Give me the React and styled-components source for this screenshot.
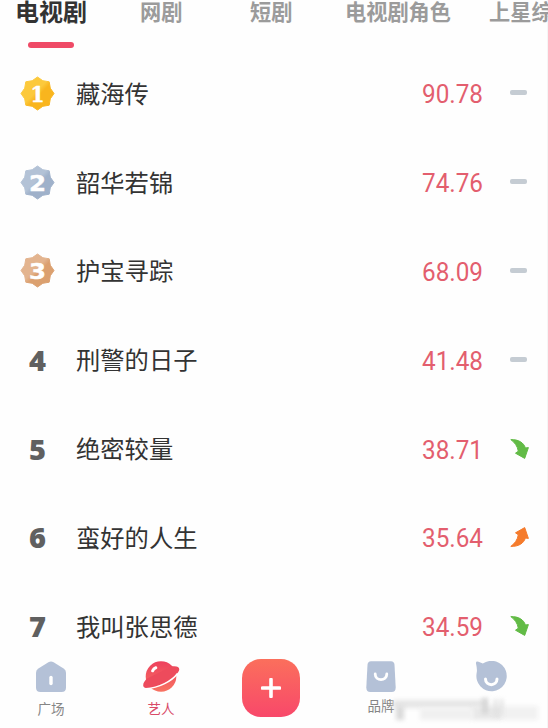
import React from "react";
import styled, { createGlobalStyle, css } from "styled-components";

const GlobalStyle = createGlobalStyle`
  * {
    box-sizing: border-box;
  }
  body {
    margin: 0;
    background: #fefefe;
    overflow: hidden;
    font-family: "Noto Sans CJK SC", sans-serif;
  }
`;

const Page = styled.div`
  display: flex;
  flex-direction: column;
  width: 548px;
  height: 728px;
  overflow: hidden;
  box-shadow: inset -1px 0 #f5f5f5;
`;

const TabBar = styled.nav`
  display: flex;
  flex: none;
  height: 49px;
  padding-left: 15px;
`;

const Tab = styled.div`
  display: flex;
  flex-direction: column;
  flex: none;
  width: ${(props) => props.$width}px;
  font-size: ${(props) => (props.$active ? 24 : 21.2)}px;
  font-weight: 700;
  line-height: 22px;
  color: ${(props) => (props.$active ? "#333" : "#9b9b9b")};
  white-space: nowrap;
`;

const TabLine = styled.div`
  width: 46px;
  height: 6px;
  margin: 20px 0 0 13px;
  border-radius: 3px;
  background: #ef4a66;
`;

const List = styled.main`
  flex: none;
  height: 605px;
`;

const Row = styled.div`
  display: grid;
  grid-template-columns: 76px 1fr 94px 58px;
  align-items: center;
  height: 88.8px;
`;

const Rank = styled.div`
  display: flex;
  justify-content: center;
  width: 75px;
  font-family: "Open Sans", sans-serif;
  font-size: 29px;
  font-weight: 800;
  line-height: 32px;
  color: #606060;
`;

const Title = styled.div`
  margin-top: -1px;
  font-size: 24.3px;
  line-height: 36px;
  color: #333;
  white-space: nowrap;
`;

const Score = styled.svg`
  display: block;
  width: 64px;
  height: 30px;
  margin-left: 26px;
  overflow: visible;
  font-family: Roboto, sans-serif;
  font-size: 25.5px;
  fill: #e35e6e;
`;

const Trend = styled.div`
  display: flex;
  padding-left: 20px;
`;

const Dash = styled.div`
  width: 17px;
  height: 5px;
  margin: -1px 0 0;
  border-radius: 2px;
  background: #c5ccd3;
`;

const Footer = styled.footer`
  position: relative;
  display: flex;
  flex: none;
  height: 74px;
`;

const NavItem = styled.div`
  display: flex;
  flex-direction: column;
  align-items: center;
  width: ${(props) => props.$width}px;
  padding-top: 7px;
  font-size: 13.5px;
  line-height: 18px;
  color: ${(props) => (props.$active ? "#d94b68" : "#858585")};

  span {
    margin-top: ${(props) => props.$gap ?? 2}px;
  }
`;

const AddButton = styled.div`
  display: flex;
  align-items: center;
  justify-content: center;
  width: 58px;
  height: 58px;
  margin-top: -2px;
  border-radius: 19px;
  background: linear-gradient(#fb6f5c, #f8486a);
`;

const smear = css`
  position: absolute;
  filter: blur(2px);
`;

const Smudge = styled.div`
  ${smear}
  left: ${(props) => props.$x}px;
  top: ${(props) => props.$y}px;
  width: ${(props) => props.$w}px;
  height: ${(props) => props.$h}px;
  background: ${(props) => props.$color};
`;

const tabs = [
  { label: "电视剧", width: 125, active: true },
  { label: "网剧", width: 110 },
  { label: "短剧", width: 95 },
  { label: "电视剧角色", width: 144 },
  { label: "上星综艺", width: 100 },
];

const rows = [
  { rank: 1, title: "藏海传", score: "90.78", trend: "same" },
  { rank: 2, title: "韶华若锦", score: "74.76", trend: "same" },
  { rank: 3, title: "护宝寻踪", score: "68.09", trend: "same" },
  { rank: 4, title: "刑警的日子", score: "41.48", trend: "same" },
  { rank: 5, title: "绝密较量", score: "38.71", trend: "down" },
  { rank: 6, title: "蛮好的人生", score: "35.64", trend: "up" },
  { rank: 7, title: "我叫张思德", score: "34.59", trend: "down" },
];

const smudges = [
  { x: 393, y: 46, w: 92, h: 8, color: "#e6e6e6" },
  { x: 396, y: 52, w: 8, h: 14, color: "#dadada" },
  { x: 420, y: 54, w: 52, h: 12, color: "#f0f0f0" },
  { x: 472, y: 52, w: 30, h: 14, color: "#e9e9e9" },
  { x: 502, y: 52, w: 36, h: 14, color: "#f1f1f1" },
  { x: 482, y: 44, w: 6, h: 16, color: "#d5d5d5" },
  { x: 494, y: 45, w: 3, h: 18, color: "#dedede" },
  { x: 500, y: 45, w: 3, h: 18, color: "#dedede" },
];

const medals = {
  1: { from: "#fcc93c", to: "#f9b51e" },
  2: { from: "#b3c2d6", to: "#9fb1ca" },
  3: { from: "#e3b48f", to: "#dba06f" },
};

function Medal({ rank }) {
  const { from, to } = medals[rank];
  return (
    <svg width="35" height="35" viewBox="0 0 35 35">
      <defs>
        <linearGradient id={`medal${rank}`} x1="0" y1="0" x2="1" y2="1">
          <stop offset="0.45" stopColor={from} />
          <stop offset="0.55" stopColor={to} />
        </linearGradient>
      </defs>
      <path
        d="M17.5 1 22.8 4.7 29.2 5.8 30.3 12.2 34 17.5 30.3 22.8 29.2 29.2 22.8 30.3 17.5 34 12.2 30.3 5.8 29.2 4.7 22.8 1 17.5 4.7 12.2 5.8 5.8 12.2 4.7Z"
        fill={`url(#medal${rank})`}
        stroke={`url(#medal${rank})`}
        strokeLinejoin="round"
      />
      <text
        x="17.5"
        y="25.5"
        textAnchor="middle"
        textLength={rank === 1 ? 14 : 17}
        lengthAdjust="spacingAndGlyphs"
        fontFamily={rank === 1 ? "DejaVu Serif" : "DejaVu Sans"}
        fontSize="22"
        fontWeight="700"
        fill="#fff"
        stroke="#fff"
        strokeWidth="0.5"
      >
        {rank}
      </text>
    </svg>
  );
}

function Arrow({ up }) {
  const color = up ? "#f57b2c" : "#62bb46";
  return (
    <svg width="20" height="22" viewBox="0 0 20 22">
      <g transform={up ? "matrix(1 0 0 -1 0 22)" : undefined}>
        <path
          d="M.8 1.6C8.5 1.4 13.6 4.5 15.4 10L18.4 9.6 14.7 20.4 5.5 15.2 8.3 13.2C7.6 8.2 4.6 4.3.8 1.6Z"
          fill={color}
          stroke={color}
          strokeWidth="1"
          strokeLinejoin="round"
        />
      </g>
    </svg>
  );
}

function HomeIcon() {
  return (
    <svg width="32" height="36" viewBox="0 0 32 36">
      <path
        d="M13.4 1.2Q16 -.4 18.6 1.2L29 7.8Q31 9.3 31 12V26.5Q31 31 26.5 31H5.5Q1 31 1 26.5V12Q1 9.3 3 7.8Z"
        fill="#b4c1d7"
      />
      <path d="M16 16.5V22.5" stroke="#fff" strokeWidth="3.4" strokeLinecap="round" />
    </svg>
  );
}

function PlanetIcon() {
  return (
    <svg width="38" height="36" viewBox="0 0 38 36">
      <defs>
        <linearGradient id="planet" x1="0" y1="0" x2="0" y2="1">
          <stop offset="0" stopColor="#ed405d" />
          <stop offset="1" stopColor="#f87362" />
        </linearGradient>
      </defs>
      <circle cx="19" cy="15.5" r="15.3" fill="url(#planet)" />
      <path
        d="M30 5.3C36.5 4.5 38.8 7 36.3 11 33 16.5 24 22 15 25 7.5 27.7 1.5 28 1.2 24.5 1 22 3 19.5 5 17.5Z"
        fill="#ed4b5c"
      />
      <path d="M4 27.7C17 27 30 20 35.5 12.5" fill="none" stroke="#fff" strokeWidth="1.5" />
      <path d="M10.6 9.8Q11.6 7.4 13.8 6.7" fill="none" stroke="#fff" strokeWidth="3" strokeLinecap="round" />
    </svg>
  );
}

function BagIcon() {
  return (
    <svg width="32" height="36" viewBox="0 0 32 36">
      <path
        d="M6 .3H26Q29.2 .3 29.5 3.8L30.7 26.5Q30.7 31 26.7 31H5.3Q1.3 31 1.3 26.5L2.5 3.8Q2.8 .3 6 .3Z"
        fill="#b4c1d7"
      />
      <path d="M10.2 13C10.2 20.5 21.8 20.5 21.8 13" fill="none" stroke="#fff" strokeWidth="2.8" strokeLinecap="round" />
    </svg>
  );
}

function FaceIcon() {
  return (
    <svg width="34" height="36" viewBox="0 0 34 36">
      <path
        d="M2 2.4Q1.7 -.2 4.5 .8L8.8 2.6A15.2 15.2 0 1 1 2.6 12.3Q3.5 9 2 2.4Z"
        fill="#b4c1d7"
      />
      <path d="M11.5 18C11.5 25.5 23 25.5 23 18" fill="none" stroke="#fff" strokeWidth="3" strokeLinecap="round" />
    </svg>
  );
}

function RankRow({ row }) {
  return (
    <Row>
      <Rank>{row.rank <= 3 ? <Medal rank={row.rank} /> : row.rank}</Rank>
      <Title>{row.title}</Title>
      <Score>
        <text x="0" y="24.5" textLength="61" lengthAdjust="spacingAndGlyphs">
          {row.score}
        </text>
      </Score>
      <Trend>{row.trend === "same" ? <Dash /> : <Arrow up={row.trend === "up"} />}</Trend>
    </Row>
  );
}

function App() {
  return (
    <>
      <GlobalStyle />
      <Page>
        <TabBar>
          {tabs.map((tab) => (
            <Tab key={tab.label} $width={tab.width} $active={tab.active}>
              {tab.label}
              {tab.active && <TabLine />}
            </Tab>
          ))}
        </TabBar>
        <List>
          {rows.map((row) => (
            <RankRow key={row.rank} row={row} />
          ))}
        </List>
        <Footer>
          <NavItem $width={102}>
            <HomeIcon />
            <span>广场</span>
          </NavItem>
          <NavItem $width={118} $active>
            <PlanetIcon />
            <span>艺人</span>
          </NavItem>
          <NavItem $width={102}>
            <AddButton>
              <svg width="20" height="20" viewBox="0 0 20 20">
                <path d="M10 1.5V18.5M1.5 10H18.5" stroke="#fff" strokeWidth="3.6" strokeLinecap="round" />
              </svg>
            </AddButton>
          </NavItem>
          <NavItem $width={118} $gap={-1}>
            <BagIcon />
            <span>品牌</span>
          </NavItem>
          <NavItem $width={102}>
            <FaceIcon />
          </NavItem>
          {smudges.map((s) => (
            <Smudge key={`${s.x}-${s.y}`} $x={s.x} $y={s.y} $w={s.w} $h={s.h} $color={s.color} />
          ))}
        </Footer>
      </Page>
    </>
  );
}

export default App;
